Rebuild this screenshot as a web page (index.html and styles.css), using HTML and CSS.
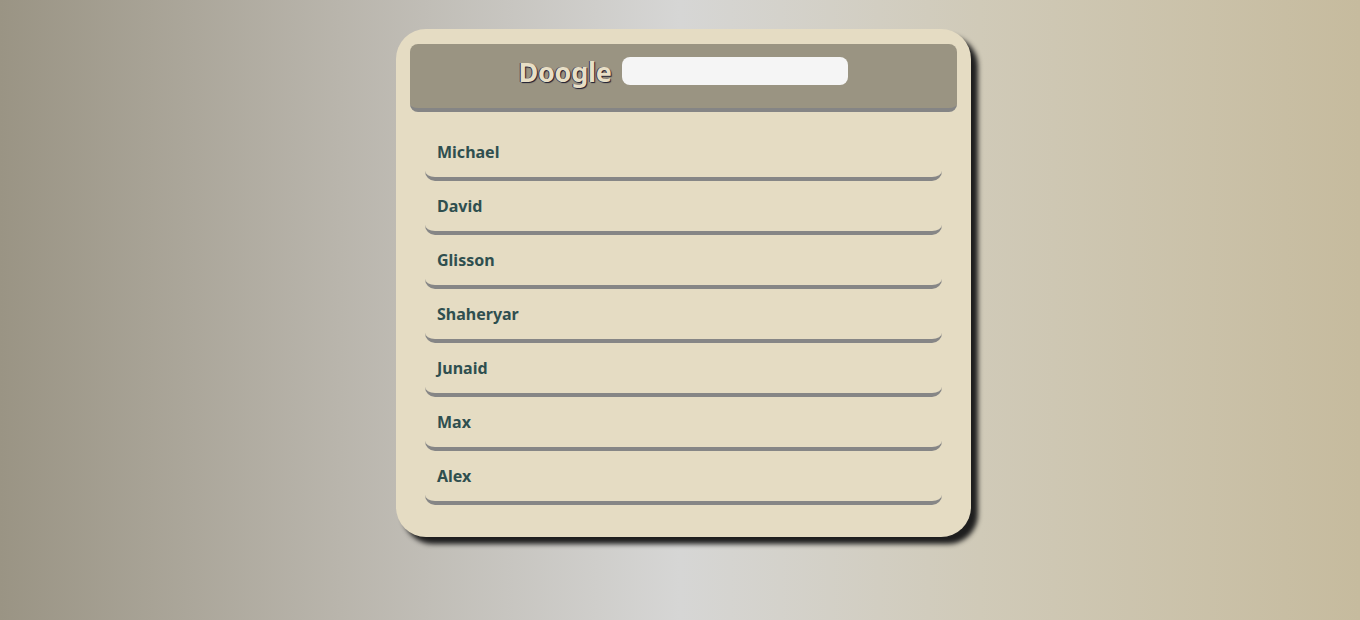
FILE: index.html
```html
<!DOCTYPE html>
<html lang="en">
<head>
<meta charset="utf-8">
<title>Doogle</title>
<link rel="stylesheet" href="styles.css">
</head>
<body>
<main class="card">
  <header class="header">
    <h1 class="logo">Doogle</h1>
    <input class="search" type="text" aria-label="Search">
  </header>
  <ul class="list">
    <li class="item">Michael</li>
    <li class="item">David</li>
    <li class="item">Glisson</li>
    <li class="item">Shaheryar</li>
    <li class="item">Junaid</li>
    <li class="item">Max</li>
    <li class="item">Alex</li>
  </ul>
</main>
</body>
</html>
```
FILE: styles.css
```css
html, body {
  margin: 0;
  height: 100%;
}
body {
  background: linear-gradient(to right, #9a9484 0%, #b9b5ac 25%, #d6d6d5 50%, #d0cab8 72%, #c6bb9e 100%);
  font-family: "Noto Sans", "DejaVu Sans", sans-serif;
  display: flex;
  justify-content: center;
  align-items: flex-start;
  padding-top: 29px;
  box-sizing: border-box;
}
.card {
  width: 575px;
  height: 508px;
  margin-left: 7px;
  box-sizing: border-box;
  background: #e5dcc3;
  border-radius: 30px;
  padding: 15px 14px;
  box-shadow: 7px 7px 5px #1e1e1e;
}
.header {
  height: 64px;
  background: #9a9482;
  border-bottom: 4px solid #858585;
  border-radius: 8px;
  display: flex;
  justify-content: center;
  align-items: center;
  gap: 11px;
}
.logo {
  margin: 0;
  font-size: 27px;
  font-weight: 700;
  color: #e8dfc6;
  text-shadow: 1px 1px 1px #1a1a2e, -1px 0 0 #3a3a55;
  letter-spacing: -0.3px;
  position: relative;
  top: -5px;
}
.search {
  width: 226px;
  height: 28px;
  box-sizing: border-box;
  border: none;
  border-radius: 8px;
  background: #f5f5f5;
  margin-top: -10px;
}
.list {
  list-style: none;
  margin: 15px 15px 0;
  padding: 0;
}
.item {
  height: 50px;
  border-bottom: 4px solid #868686;
  border-radius: 0 0 10px 10px;
  padding-left: 12px;
  line-height: 51px;
  font-size: 16px;
  font-weight: 700;
  color: #2f4f4f;
}
```
